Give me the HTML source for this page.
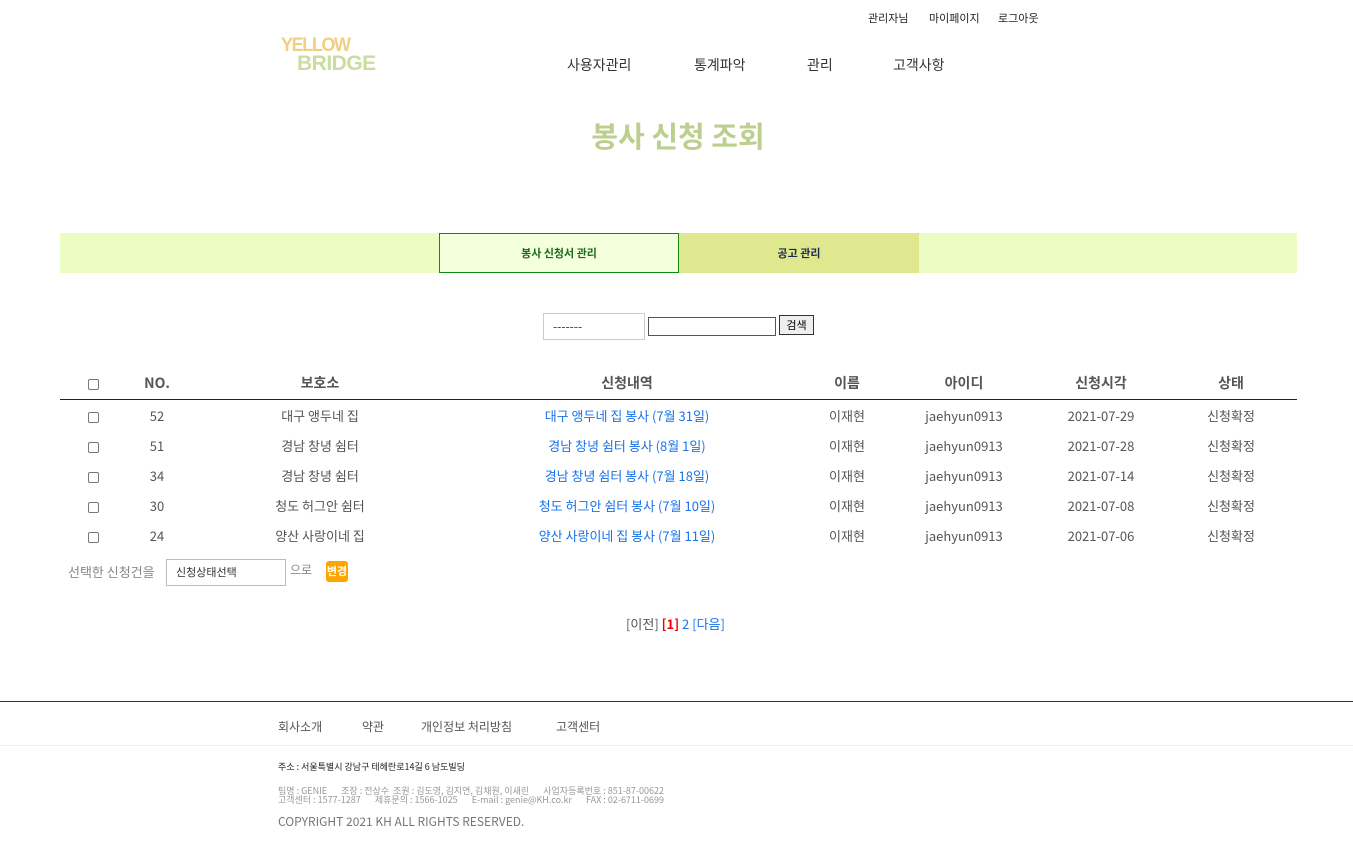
<!DOCTYPE html>
<html><head><meta charset="utf-8"><style>
body{margin:0;width:1353px;height:841px;position:relative;background:#fff;font-family:"Noto Sans CJK KR","Liberation Sans",sans-serif;color:#555;overflow:hidden;line-height:1.2}
.a{position:absolute;white-space:nowrap}
.c{transform:translateX(-50%)}
.cb{position:absolute;width:9px;height:9px;border:1px solid #777;border-radius:2px;background:#fff}
.blue{color:#1a73e8}
</style></head><body>
<div class="a" style="left:868px;top:12px;font-size:11px;color:#222">관리자님</div>
<div class="a" style="left:929px;top:12px;font-size:11px;color:#222">마이페이지</div>
<div class="a" style="left:998px;top:12px;font-size:11px;color:#222">로그아웃</div>
<div class="a" style="left:281px;top:37px;font-family:'Liberation Sans',sans-serif;font-size:19px;font-weight:bold;color:#f0d080;letter-spacing:-1.5px;line-height:18px;transform:scaleX(0.95);transform-origin:left">YELLOW</div>
<div class="a" style="left:297px;top:54px;font-family:'Liberation Sans',sans-serif;font-size:21px;font-weight:bold;color:#cbdca0;letter-spacing:-0.5px;line-height:20px">BRIDGE</div>
<div class="a" style="left:567px;top:57px;font-size:14px;color:#333">사용자관리</div>
<div class="a" style="left:694px;top:57px;font-size:14px;color:#333">통계파악</div>
<div class="a" style="left:807px;top:57px;font-size:14px;color:#333">관리</div>
<div class="a" style="left:893px;top:57px;font-size:14px;color:#333">고객사항</div>
<div class="a c" style="left:678px;top:118px;font-size:29px;font-weight:bold;color:#bccf90">봉사 신청 조회</div>
<div class="a" style="left:60px;top:233px;width:1237px;height:40px;background:#ebfdc2"></div>
<div class="a" style="left:439px;top:233px;width:238px;height:38px;background:#f4ffdc;border:1px solid #138a13;font-size:11px;font-weight:bold;color:#1d6a1d;text-align:center;line-height:38px">봉사 신청서 관리</div>
<div class="a" style="left:679px;top:233px;width:240px;height:40px;background:#dfe88e;font-size:11px;font-weight:bold;color:#1e2a50;text-align:center;line-height:40px">공고 관리</div>
<div class="a" style="left:543px;top:313px;width:100px;height:25px;border:1px solid #ccc;font-size:12px;line-height:25px;text-indent:9px;color:#333">-------</div>
<div class="a" style="left:648px;top:317px;width:126px;height:17px;border:1px solid #555"></div>
<div class="a" style="left:779px;top:315px;width:33px;height:18px;border:1px solid #333;background:#efefef;font-size:11px;line-height:18px;text-align:center;color:#000">검색</div>
<div class="cb" style="left:88px;top:379px"></div>
<div class="a c" style="left:157px;top:375px;font-size:14px;font-weight:bold">NO.</div>
<div class="a c" style="left:320px;top:375px;font-size:14px;font-weight:bold">보호소</div>
<div class="a c" style="left:627px;top:375px;font-size:14px;font-weight:bold">신청내역</div>
<div class="a c" style="left:847px;top:375px;font-size:14px;font-weight:bold">이름</div>
<div class="a c" style="left:964px;top:375px;font-size:14px;font-weight:bold">아이디</div>
<div class="a c" style="left:1101px;top:375px;font-size:14px;font-weight:bold">신청시각</div>
<div class="a c" style="left:1231px;top:375px;font-size:14px;font-weight:bold">상태</div>
<div class="a" style="left:60px;top:399px;width:1237px;height:1px;background:#222"></div>
<div id="rows"></div>
<div class="a" style="left:68px;top:564px;font-size:13px;color:#888">선택한 신청건을</div>
<div class="a" style="left:166px;top:559px;width:118px;height:25px;border:1px solid #bbb;font-size:11px;line-height:25px;text-indent:9px;color:#333">신청상태선택</div>
<div class="a" style="left:290px;top:563px;font-size:12px;color:#888">으로</div>
<div class="a" style="left:326px;top:561px;width:22px;height:21px;background:#ffa500;border-radius:3px;color:#fff;font-size:11px;font-weight:bold;text-align:center;line-height:21px">변경</div>
<div class="a" style="left:626px;top:616px;font-size:13px;color:#555">[이전] <span style="color:#e00;font-weight:bold">[1]</span> <span class="blue">2</span> <span class="blue">[다음]</span></div>
<div class="a" style="left:0;top:701px;width:1353px;height:1px;background:#333"></div>
<div class="a" style="left:278px;top:720px;font-size:12px">회사소개</div>
<div class="a" style="left:362px;top:720px;font-size:12px">약관</div>
<div class="a" style="left:421px;top:720px;font-size:12px">개인정보 처리방침</div>
<div class="a" style="left:556px;top:720px;font-size:12px">고객센터</div>
<div class="a" style="left:0;top:745px;width:1353px;height:1px;background:#eee"></div>
<div class="a" style="left:278px;top:762px;font-size:9px;color:#222">주소 : 서울특별시 강남구 테헤란로14길 6 남도빌딩</div>
<div class="a" style="left:278px;top:786px;font-size:9px;color:#999">팀명 : GENIE &nbsp;&nbsp;&nbsp;&nbsp;&nbsp; 조장 : 전상수 &nbsp;조원 : 김도영, 김지연, 김채원, 이새린 &nbsp;&nbsp;&nbsp;&nbsp;&nbsp; 사업자등록번호 : 851-87-00622</div>
<div class="a" style="left:278px;top:795px;font-size:9px;color:#999">고객센터 : 1577-1287 &nbsp;&nbsp;&nbsp;&nbsp;&nbsp; 제휴문의 : 1566-1025 &nbsp;&nbsp;&nbsp;&nbsp;&nbsp; E-mail : genie@KH.co.kr &nbsp;&nbsp;&nbsp;&nbsp;&nbsp; FAX : 02-6711-0699</div>
<div class="a" style="left:278px;top:815px;font-size:12px;color:#777">COPYRIGHT 2021 KH ALL RIGHTS RESERVED.</div>
<script>
var d=[["52","대구 앵두네 집","대구 앵두네 집 봉사 (7월 31일)","2021-07-29"],["51","경남 창녕 쉼터","경남 창녕 쉼터 봉사 (8월 1일)","2021-07-28"],["34","경남 창녕 쉼터","경남 창녕 쉼터 봉사 (7월 18일)","2021-07-14"],["30","청도 허그안 쉼터","청도 허그안 쉼터 봉사 (7월 10일)","2021-07-08"],["24","양산 사랑이네 집","양산 사랑이네 집 봉사 (7월 11일)","2021-07-06"]];
var h="";d.forEach(function(r,i){var t=408+i*30;
h+='<div class="cb" style="left:88px;top:'+(t+4)+'px"></div>'+
'<div class="a c" style="left:157px;top:'+t+'px;font-size:13px">'+r[0]+'</div>'+
'<div class="a c" style="left:320px;top:'+t+'px;font-size:13px">'+r[1]+'</div>'+
'<div class="a c blue" style="left:627px;top:'+t+'px;font-size:13px">'+r[2]+'</div>'+
'<div class="a c" style="left:847px;top:'+t+'px;font-size:13px">이재현</div>'+
'<div class="a c" style="left:964px;top:'+t+'px;font-size:13px">jaehyun0913</div>'+
'<div class="a c" style="left:1101px;top:'+t+'px;font-size:13px">'+r[3]+'</div>'+
'<div class="a c" style="left:1231px;top:'+t+'px;font-size:13px">신청확정</div>';});
document.getElementById("rows").innerHTML=h;
</script>
</body></html>
